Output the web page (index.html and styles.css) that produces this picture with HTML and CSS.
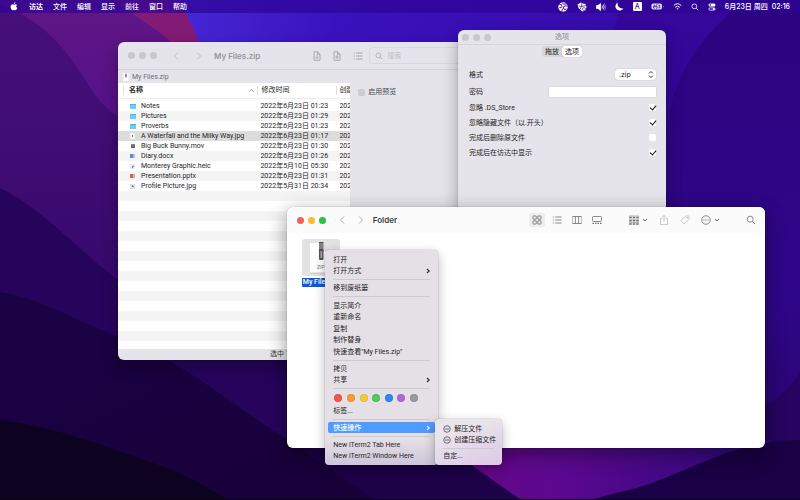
FILE: index.html
```html
<!DOCTYPE html>
<html lang="zh-CN">
<head>
<meta charset="utf-8">
<title>访达</title>
<link rel="stylesheet" href="styles.css">
</head>
<body>
<svg class="wallpaper" viewBox="0 0 800 500" preserveAspectRatio="xMidYMid slice" aria-hidden="true">
  <defs>
    <linearGradient id="sky" x1="0" y1="0" x2="1" y2="0"><stop offset=".22" stop-color="#4628d4"/><stop offset=".42" stop-color="#3a12bd"/><stop offset="1" stop-color="#3508a0"/></linearGradient>
    <linearGradient id="right" x1="0" y1="0" x2="0" y2="1"><stop offset="0" stop-color="#35079c"/><stop offset=".5" stop-color="#31058c"/><stop offset="1" stop-color="#2a0570"/></linearGradient>
    <linearGradient id="far" x1="0" y1="0" x2="0" y2="1"><stop offset="0" stop-color="#2c0480"/><stop offset=".6" stop-color="#2e0688"/><stop offset="1" stop-color="#260560"/></linearGradient>
    <linearGradient id="mag" x1="0" y1="0" x2="1" y2="1"><stop offset="0" stop-color="#7a1a80"/><stop offset="1" stop-color="#8d1c66"/></linearGradient>
    <linearGradient id="upper" x1="0" y1="0" x2="0" y2="1"><stop offset="0" stop-color="#611684"/><stop offset="1" stop-color="#4a0f8c"/></linearGradient>
    <linearGradient id="left" x1="0" y1="0" x2="0" y2="1"><stop offset="0" stop-color="#471078"/><stop offset="1" stop-color="#2b0566"/></linearGradient>
    <linearGradient id="low" x1="0" y1="0" x2="1" y2="1"><stop offset="0" stop-color="#1a0246"/><stop offset="1" stop-color="#180138"/></linearGradient>
    <linearGradient id="glow" x1="0" y1="0" x2="1" y2="0"><stop offset="0" stop-color="#680682"/><stop offset=".35" stop-color="#5c0890"/><stop offset="1" stop-color="#2c087c"/></linearGradient>
  </defs>
  <rect width="800" height="500" fill="url(#sky)"/>
  <path d="M619 0C618 30 605 60 560 120L400 500H800V0z" fill="url(#right)"/>
  <path d="M745 0C700 35 675 75 668 120L640 500H800V0z" fill="url(#far)"/>
  <path d="M765 406C780 397 792 386 800 373V500H740z" fill="#26045f"/>
  <path d="M0 0H178C186 14 194 28 200 46L230 200H0z" fill="url(#mag)"/>
  <path d="M0 0H115C135 18 158 28 175 46L220 200H0z" fill="url(#upper)"/>
  <path d="M0 5C40 18 66 48 84 78C96 98 108 112 125 120L240 300V460H0z" fill="url(#left)"/>
  <path d="M0 188C50 212 90 265 140 295L320 370L420 500H0z" fill="#26045c"/>
  <path d="M0 292C40 298 80 322 118 337C190 364 230 405 290 441L375 500H0z" fill="url(#low)"/>
  <path d="M0 420C60 428 110 448 150 462C180 472 205 485 228 500H0z" fill="#0e0221"/>
  <path d="M290 360L470 464L521 500H375L290 441z" fill="#1d0248"/>
  <path d="M440 440H770L760 500H521L470 464z" fill="url(#glow)"/>
  <path d="M620 492C680 480 725 440 800 440V500H590z" fill="#1a0044"/>
  <rect y="499" width="800" height="1" fill="#0b0116"/>
</svg>

<svg class="sprite" aria-hidden="true">
  <symbol id="back" viewBox="0 0 6 10"><path d="M5 1.5 1.5 5 5 8.500"/></symbol>
  <symbol id="fwd" viewBox="0 0 6 10"><path d="M1 1.500 4.500 5 1 8.500"/></symbol>
  <symbol id="more" viewBox="0 0 6 10"><path d="M1 2.500 4 5 1 7.500"/></symbol>
  <symbol id="down" viewBox="0 0 6 10"><path d="M1 4 3 6 5 4"/></symbol>
  <symbol id="lens" viewBox="0 0 10 10"><circle cx="4.200" cy="4.200" r="3"/><path d="M6.500 6.500 9 9"/></symbol>
  <symbol id="list" viewBox="0 0 10 10"><path d="M3.200 2H9.500M3.200 5H9.500M3.200 8H9.500M.8 2h1M.8 5h1M.8 8h1"/></symbol>
</svg>

<header class="menubar">
  <svg class="apple" viewBox="0 0 14 17" fill="#fff" aria-label="Apple"><path d="M9.600 0c.1 1.700-1.200 3.400-2.900 3.500C6.500 1.900 8 .2 9.600 0zM12.600 5.800c-2.200 1.400-1.800 4.400.6 5.300-.5 1.600-2 4.300-3.500 4.400-1 0-1.400-.6-2.600-.6s-1.600.6-2.600.6C2.400 15.500.5 11.800.6 8.900.7 6 2.600 4.300 4.500 4.300c1.100 0 1.900.7 2.700.7.700 0 1.700-.8 3-.7 1 .1 1.900.5 2.400 1.500z"/></svg>
  <nav class="menus">
    <a href="#">访达</a><a href="#">文件</a><a href="#">编辑</a><a href="#">显示</a><a href="#">前往</a><a href="#">窗口</a><a href="#">帮助</a>
  </nav>
  <div class="status">
    <svg class="s10" viewBox="0 0 20 20"><circle cx="10" cy="10" r="9.500" fill="#fff"/><path d="M2 4q7 1 6 5t-5 2M8 1q1 5 9 3M19 8q-9-1-8 4t6 2M8 19q-1-4 2-6" fill="none" stroke="#35099b" stroke-width="2"/></svg>
    <svg class="s10" viewBox="0 0 20 20"><path d="M1 5 8 1l4 2 5 1 2 6-2 7-6 2-4-3-4-4z" fill="#fff"/><path d="M3 8l6 1 1-7M9 9l-3 6M9 9l9-2" stroke="#35099b" stroke-width="1.400" fill="none"/><circle cx="14" cy="14" r="3" fill="none" stroke="#35099b" stroke-width="1.200"/></svg>
    <svg class="s10" viewBox="0 0 20 20" fill="none" stroke="#fff" stroke-width="1.600"><path d="M1 7h3l5-4v14l-5-4H1z" fill="#fff"/><path d="M12 7q2 3 0 6M14.500 5q3.500 5 0 10"/><path d="M17 3q5 7 0 14" opacity=".5"/></svg>
    <svg class="s9" viewBox="0 0 16 16"><path d="M5 1a7.500 7.500 0 1 0 10 10A8 8 0 0 1 5 1z" fill="#fff"/></svg>
    <span class="ime">A</span>
    <svg class="battery" viewBox="0 0 26 14"><rect x="1" y="1" width="21" height="12" rx="3.500" fill="#fff" fill-opacity=".85"/><path d="M24 5q2 2 0 4z" fill="#fff"/><path d="M12.500 2 9 7.500h4L11 12M5 4.500h3v2.500H5v3h3M15 4.500h3l-1.500 2q2 0 1.500 3h-3" fill="none" stroke="#35099b" stroke-width="1.400"/></svg>
    <svg class="s9" viewBox="0 0 18 18" fill="none" stroke="#fff" stroke-width="2"><path d="M1.500 7q7.500-7 15 0M4.500 10.500q4.500-4 9 0"/><path d="M7 13.200q2-1.800 4 0L9 15.500z" fill="#fff" stroke="none"/></svg>
    <svg class="s8 line"><use href="#lens"/></svg>
    <svg class="s8" viewBox="0 0 16 16"><rect x="1" y="1" width="14" height="6" rx="3" fill="#fff"/><circle cx="4.500" cy="4" r="1.600" fill="#35099b"/><rect x="1.700" y="9.700" width="12.600" height="4.600" rx="2.300" fill="none" stroke="#fff" stroke-width="1.400"/><circle cx="11.500" cy="12" r="2" fill="#fff"/></svg>
    <time><span>6月23日 周四</span><span>02:16</span></time>
  </div>
</header>

<main class="desktop">
  <section class="window archive" aria-label="My Files.zip">
    <div class="titlebar">
      <div class="lights off"><i></i><i></i><i></i></div>
      <div class="arrows"><button aria-label="后退"><svg><use href="#back"/></svg></button><button aria-label="前进"><svg><use href="#fwd"/></svg></button></div>
      <h1>My Files.zip</h1>
      <div class="tools">
        <button aria-label="解压"><svg viewBox="0 0 16 20"><path d="M2 1.500h7l5 5v12H2zM9 1.500v5h5M8 7v8M5.500 12.500 8 15l2.500-2.500"/></svg></button>
        <button aria-label="添加"><svg viewBox="0 0 16 20"><path d="M2 1.500h7l5 5v12H2zM9 1.500v5h5M8 8v8M4.500 12h7"/></svg></button>
        <button aria-label="列表"><svg><use href="#list"/></svg></button>
      </div>
      <label class="search"><svg><use href="#lens"/></svg><input type="search" placeholder="搜索" aria-label="搜索"></label>
    </div>
    <div class="path"><svg viewBox="0 0 12 16"><path d="M1 0h10v16H1z" fill="#fff"/><path d="M6 1.500v7" stroke="#444" stroke-width="2.400"/></svg>My Files.zip</div>
    <div class="split">
      <div class="files">
        <table>
          <thead><tr><th class="name">名称<svg viewBox="0 0 10 6"><path d="M1 5l4-4 4 4"/></svg></th><th>修改时间</th><th>创建时间</th></tr></thead>
          <tbody>
            <tr class="gap"><td colspan="3"></td></tr>
            <tr><td class="f folder">Notes</td><td>2022年6月23日 01:23</td><td>2022年</td></tr>
            <tr><td class="f folder">Pictures</td><td>2022年6月23日 01:29</td><td>2022年</td></tr>
            <tr><td class="f folder">Proverbs</td><td>2022年6月23日 01:23</td><td>2022年</td></tr>
            <tr class="selected"><td class="f image">A Waterfall and the Milky Way.jpg</td><td>2022年6月23日 01:17</td><td>2022年</td></tr>
            <tr><td class="f movie">Big Buck Bunny.mov</td><td>2022年6月23日 01:30</td><td>2022年</td></tr>
            <tr><td class="f doc">Diary.docx</td><td>2022年6月23日 01:26</td><td>2022年</td></tr>
            <tr><td class="f heic">Monterey Graphic.heic</td><td>2022年5月10日 05:30</td><td>2022年</td></tr>
            <tr><td class="f slides">Presentation.pptx</td><td>2022年6月23日 01:31</td><td>2022年</td></tr>
            <tr><td class="f photo">Profile Picture.jpg</td><td>2022年5月31日 20:34</td><td>2022年</td></tr>
          </tbody>
        </table>
        <div class="stripes"></div>
      </div>
      <div class="preview"><label><input type="checkbox" disabled>启用预览</label></div>
    </div>
    <footer>选中 1 项</footer>
  </section>

  <section class="window options" aria-label="选项">
    <div class="titlebar"><div class="lights off"><i></i><i></i><i></i></div><h2>选项</h2></div>
    <div class="tabs"><button>拖放</button><button class="on">选项</button></div>
    <form>
      <div class="row tall"><label for="fmt">格式</label><span class="pick"><select id="fmt"><option>.zip</option></select><svg viewBox="0 0 8 12"><path d="M1.500 4.500 4 2l2.500 2.500M1.500 7.500 4 10l2.500-2.500"/></svg></span></div>
      <div class="row tall"><label for="pw">密码</label><input id="pw" type="password"></div>
      <div class="row"><label for="c1">忽略 .DS_Store</label><input id="c1" type="checkbox" checked></div>
      <div class="row"><label for="c2">忽略隐藏文件（以.开头）</label><input id="c2" type="checkbox" checked></div>
      <div class="row"><label for="c3">完成后删除原文件</label><input id="c3" type="checkbox"></div>
      <div class="row"><label for="c4">完成后在访达中显示</label><input id="c4" type="checkbox" checked></div>
    </form>
  </section>

  <section class="window finder" aria-label="Folder">
    <div class="titlebar">
      <div class="lights"><i></i><i></i><i></i></div>
      <div class="arrows"><button aria-label="后退"><svg><use href="#back"/></svg></button><button aria-label="前进"><svg><use href="#fwd"/></svg></button></div>
      <h2>Folder</h2>
      <div class="views">
        <button class="on" aria-label="图标"><svg viewBox="0 0 20 20"><rect x="2" y="2" width="6.500" height="6.500" rx="1"/><rect x="11.500" y="2" width="6.500" height="6.500" rx="1"/><rect x="2" y="11.500" width="6.500" height="6.500" rx="1"/><rect x="11.500" y="11.500" width="6.500" height="6.500" rx="1"/></svg></button>
        <button aria-label="列表"><svg class="thin"><use href="#list"/></svg></button>
        <button aria-label="分栏"><svg viewBox="0 0 20 20"><rect x="0" y="3" width="20" height="14" rx="2"/><path d="M6.700 3v14M13.300 3v14"/></svg></button>
        <button aria-label="画廊"><svg viewBox="0 0 20 20"><rect x="1" y="3" width="18" height="10" rx="2"/><path d="M1 16.500h3M6 16.500h3M11 16.500h3M16 16.500h3" stroke-width="2.500"/></svg></button>
      </div>
      <div class="actions">
        <button aria-label="分组"><svg viewBox="0 0 20 20"><path d="M0 2h20M0 8.500h20M0 15h20" stroke-width="1"/><path d="M.5 5h5M7.500 5h5M14.500 5h5M.5 11.500h5M7.500 11.500h5M14.500 11.500h5M.5 18h5M7.500 18h5M14.500 18h5" stroke-width="2.600"/></svg><svg class="chev"><use href="#down"/></svg></button>
        <button class="dim" aria-label="共享"><svg viewBox="0 0 20 20"><path d="M7 7H3v12h14V7h-4M10 13V1M6.500 4.500 10 1l3.500 3.500"/></svg></button>
        <button class="dim" aria-label="标签"><svg viewBox="0 0 20 20"><path d="M11.500 2H18v6.500L8.500 18 1.500 11.500z"/><circle cx="14.500" cy="5.500" r=".8"/></svg></button>
        <button aria-label="更多"><svg viewBox="0 0 20 20"><circle cx="10" cy="10" r="8.500"/><path d="M5 10h2M9 10h2M13 10h2" stroke-width="2.200"/></svg><svg class="chev"><use href="#down"/></svg></button>
        <button class="find" aria-label="搜索"><svg class="thin"><use href="#lens"/></svg></button>
      </div>
    </div>
    <figure class="file">
      <div class="thumb"><svg viewBox="0 0 44 64"><path d="M0 2h28l16 16v44H0z" fill="#fff"/><path d="M28 2v16h16z" fill="#ddd"/><path d="M18 0h9v20h-9z" fill="#4a4a4a"/><path d="M18 4h9M18 8h9M18 12h9" stroke="#ddd" stroke-width="1.500"/><rect x="18" y="15" width="9" height="21" rx="2" fill="#555"/><rect x="20.500" y="18" width="4" height="14" fill="#999"/><path d="M0 62h44" stroke="#bbb" stroke-width="1.500"/></svg><span>ZIP</span></div>
      <figcaption>My Files.zip</figcaption>
    </figure>
  </section>

  <div class="menu context" role="menu">
    <button role="menuitem">打开</button>
    <button role="menuitem">打开方式<svg><use href="#more"/></svg></button>
    <hr>
    <button role="menuitem">移到废纸篓</button>
    <hr>
    <button role="menuitem">显示简介</button>
    <button role="menuitem">重新命名</button>
    <button role="menuitem">复制</button>
    <button role="menuitem">制作替身</button>
    <button role="menuitem">快速查看"My Files.zip"</button>
    <hr>
    <button role="menuitem">拷贝</button>
    <button role="menuitem">共享<svg><use href="#more"/></svg></button>
    <hr>
    <div class="tags"><i class="red"></i><i class="orange"></i><i class="yellow"></i><i class="green"></i><i class="blue"></i><i class="purple"></i><i class="gray"></i></div>
    <button role="menuitem">标签...</button>
    <hr>
    <button role="menuitem" class="active">快速操作<svg><use href="#more"/></svg></button>
    <hr>
    <button role="menuitem">New iTerm2 Tab Here</button>
    <button role="menuitem">New iTerm2 Window Here</button>
  </div>
  <div class="menu sub" role="menu">
    <button role="menuitem"><svg class="circ" viewBox="0 0 16 16"><circle cx="8" cy="8" r="6.500"/><path d="M4 8h8"/></svg>解压文件</button>
    <button role="menuitem"><svg class="circ" viewBox="0 0 16 16"><circle cx="8" cy="8" r="6.500"/><path d="M4 8h8"/></svg>创建压缩文件</button>
    <hr>
    <button role="menuitem">自定...</button>
  </div>
</main>
</body>
</html>
```
FILE: styles.css
```css
* { box-sizing: border-box; }
html, body { height: 100%; }
body {
  margin: 0;
  overflow: hidden;
  position: relative;
  background: #2c0580;
  color: #262528;
  font: 7px/10px Roboto, "Noto Sans CJK SC", sans-serif;
}
button, input, select {
  font: inherit;
  color: inherit;
  border: 0;
  padding: 0;
  margin: 0;
  background: none;
  outline: 0;
}
svg { display: block; flex: none; }
h1, h2 { margin: 0; font: 600 8px/10px Inter, "Noto Sans CJK SC", sans-serif; white-space: nowrap; }
.sprite { position: absolute; width: 0; height: 0; }
.wallpaper { position: absolute; inset: 0; width: 100%; height: 100%; }

/* menu bar */
.menubar {
  position: relative;
  display: flex;
  align-items: center;
  height: 13px;
  padding: 0 10px;
  background: rgba(46, 4, 150, .72);
  color: #fff;
  font-family: Inter, "Noto Sans CJK SC", sans-serif;
  font-weight: 500;
}
.apple { width: 8px; height: 9px; }
.menus { display: flex; gap: 10px; margin-left: 11px; }
.menus a { color: #fff; text-decoration: none; }
.menus a:first-child { font-weight: 700; }
.status { display: flex; align-items: center; gap: 9px; margin-left: auto; }
.s10 { width: 10px; height: 10px; }
.s9 { width: 9px; height: 9px; }
.s8 { width: 8px; height: 8px; }
.battery { width: 13px; height: 7px; }
.line { fill: none; stroke: #fff; stroke-width: 1; }
.ime { width: 9px; height: 9px; line-height: 9px; border-radius: 1px; background: #fff; color: #35099b; text-align: center; }
time { display: flex; gap: 4px; white-space: nowrap; }

/* windows */
.window {
  position: absolute;
  display: flex;
  flex-direction: column;
  border-radius: 6px;
  overflow: hidden;
  box-shadow: 0 0 1px rgba(0, 0, 0, .5), 0 6px 16px rgba(0, 0, 0, .32);
}
.titlebar { display: flex; align-items: center; flex: none; }
.lights { display: flex; gap: 4px; }
.lights i { width: 7px; height: 7px; border-radius: 50%; background: #f35f57; }
.lights i:nth-child(2) { background: #f8bb32; }
.lights i:nth-child(3) { background: #29c241; }
.lights.off i { background: #c9c7cd; }
.arrows { display: flex; }
.arrows svg { width: 6px; height: 10px; fill: none; stroke: #a9a8ab; stroke-width: 1; }

.archive { left: 14.75%; top: 42px; width: 44%; height: 318px; background: #e5e4ea; }
.archive .titlebar { height: 28px; padding-left: 10px; border-bottom: 1px solid #d3d2d8; }
.archive .arrows { gap: 17px; margin-left: 16px; }
.archive .arrows svg { stroke: #bdbcc2; }
.archive h1 { margin-left: 12px; color: #98979c; }
.tools { display: flex; align-items: center; gap: 12px; margin-left: 53px; }
.tools svg { width: 8px; height: 10px; fill: none; stroke: #96959b; stroke-width: 1.500; }
.tools button:last-child svg { width: 10px; stroke-width: .8; }
.search { display: flex; align-items: center; gap: 4px; flex: 1; height: 17px; margin-left: 6px; padding-left: 5px; border: 1px solid #d9d8de; border-radius: 4px; }
.search svg { width: 8px; height: 8px; fill: none; stroke: #a3a2a8; stroke-width: .9; }
.search input { width: 60px; }
.search input::placeholder { color: #bfbec4; }
.path { display: flex; align-items: center; gap: 3px; flex: none; height: 13px; padding-left: 5px; color: #6f6e73; }
.path svg { width: 6px; height: 8px; }
.split { display: flex; flex: 1; min-height: 0; }
.files { display: flex; flex-direction: column; width: 66%; background: #fff; overflow: hidden; }
.archive footer { flex: none; height: 11px; padding-left: 152px; color: #3c3b3f; }
table { width: 100%; table-layout: fixed; border-collapse: collapse; }
th, td { height: 10px; padding: 0 0 0 3px; line-height: 10px; text-align: left; white-space: nowrap; overflow: hidden; }
th { height: 15px; font-weight: 400; border-bottom: 1px solid #ececec; background: linear-gradient(#dedede, #dedede) left / 1px 9px no-repeat; }
th:nth-child(2) { width: 34%; padding-left: 4px; }
th:nth-child(3) { width: 6%; }
th.name { padding-left: 11px; font-weight: 600; background-position: 5px 50%; }
th svg { float: right; width: 5px; height: 3px; margin: 4px 3px 0 0; fill: none; stroke: #777; stroke-width: 1.500; }
.gap td { height: 3px; }
tbody tr:nth-child(odd):not(.gap) { background: #f4f4f5; }
tbody tr.selected { background: #dcdcdc !important; }
.f { padding-left: 23px; background-repeat: no-repeat; background-position: 12px 50%; }
.folder { background-image: linear-gradient(#4bb4e6 1px, #6fcbf3 1px); background-size: 6px 5px; }
.image { background-image: radial-gradient(circle, #777 1px, #f6f6f6 1px); background-size: 5px 6px; }
.movie { background-image: linear-gradient(#7e8b96, #4e5e6c); background-size: 4px 4px; background-position: 13px 50%; }
.doc { background-image: linear-gradient(90deg, #5c86da 3px, #a9c2ee 3px); background-size: 5px 4px; }
.heic { background-image: radial-gradient(circle, #6c8ad0 1px, #e0e6f2 1px); background-size: 5px 5px; }
.slides { background-image: linear-gradient(90deg, #d95f4a 3px, #eda598 3px); background-size: 5px 4px; }
.photo { background-image: radial-gradient(circle, #78858f 1px, #dde1e4 1px); background-size: 5px 5px; }
.stripes { flex: 1; background: repeating-linear-gradient(#f4f4f5 0 10px, #fff 10px 20px); }
.preview { padding: 4px 0 0 8px; color: #4a494d; white-space: nowrap; }
.preview label { display: flex; align-items: center; gap: 3px; }

input[type="checkbox"] { appearance: none; width: 7px; height: 7px; border-radius: 2px; background: #fff; display: flex; justify-content: center; }
input[type="checkbox"]:checked::before { content: ""; width: 3px; height: 5px; border: solid #111; border-width: 0 1px 1px 0; transform: rotate(40deg); }
input[type="checkbox"]:disabled { background: #cbcacf; }

.options { left: 57.25%; top: 30px; width: 26%; height: 200px; background: #e5e4ea; }
.options .titlebar { height: 15px; padding: 0 4px; border-bottom: 1px solid #d6d5db; }
.options h2 { flex: 1; padding-right: 29px; text-align: center; font-size: 7px; font-weight: 500; color: #9a999e; }
.tabs { display: flex; align-self: center; margin-top: 1px; border-radius: 3px; background: #d6d5da; }
.tabs button { height: 11px; padding: 0 3px; border-radius: 3px; color: #1f1e21; }
.tabs .on { background: #fff; box-shadow: 0 0 1px rgba(0, 0, 0, .3); }
form { display: flex; flex-direction: column; padding: 9px 10px 0 11px; }
.row { display: flex; align-items: center; justify-content: space-between; height: 15px; }
.row.tall { height: 17px; }
.row label { white-space: nowrap; }
.pick { position: relative; width: 22%; }
.pick select { display: block; appearance: none; width: 100%; height: 11px; padding-left: 4px; border-radius: 3px; background: #fff; box-shadow: 0 0 1px rgba(0, 0, 0, .35); font-family: Inter, sans-serif; }
.pick svg { position: absolute; right: 2px; top: 1px; width: 6px; height: 9px; fill: none; stroke: #222; stroke-width: 1.200; pointer-events: none; }
#pw { width: 57%; height: 10px; background: #fff; box-shadow: 0 0 1px rgba(0, 0, 0, .25); }

.finder { left: 35.85%; top: 207px; width: 59.8%; height: 241px; background: #fff; box-shadow: 0 0 1px rgba(0, 0, 0, .6), 0 6px 20px rgba(0, 0, 0, .42); }
.finder .titlebar { height: 26px; padding: 0 9px 0 10px; background: #fcfbfc; }
.finder .arrows { gap: 13px; margin-left: 13px; }
.finder h2 { margin-left: 9px; color: #3c3b3e; }
.views { display: flex; gap: 4px; margin-left: auto; }
.views button { display: grid; place-items: center; width: 16px; height: 14px; border-radius: 3px; }
.views .on { background: #eeedee; }
.views svg, .actions svg { width: 10px; height: 10px; fill: none; stroke: #6c6b6e; stroke-width: 1.600; }
.views svg.thin, .actions svg.thin { stroke-width: .8; }
.actions { display: flex; align-items: center; gap: 11px; margin-left: 24px; }
.actions button { display: flex; align-items: center; gap: 3px; }
.actions .dim svg { stroke: #bdbcbf; }
.actions svg.chev { width: 6px; stroke-width: 1; }
.actions .find { margin-left: 15px; }
.file { display: flex; flex-direction: column; width: 38px; margin: 6px 0 0 15px; }
.thumb { display: flex; flex-direction: column; align-items: center; width: 100%; height: 37px; padding-top: 3px; border-radius: 3px; background: #e2e2e3; }
.thumb svg { width: 22px; height: 32px; }
.thumb span { margin-top: -10px; font-size: 5px; line-height: 6px; color: #777; }
.file figcaption { margin-top: 2px; padding: 0 1px; line-height: 9px; border-radius: 1px; background: #0c5bd3; color: #fff; white-space: nowrap; font-weight: 500; }

/* menus */
.menu {
  position: absolute;
  display: flex;
  flex-direction: column;
  padding: 4px 3px 3px;
  border-radius: 4px;
  box-shadow: 0 0 1px rgba(0, 0, 0, .6), 0 4px 12px rgba(0, 0, 0, .28);
}
.menu button {
  display: flex;
  align-items: center;
  flex: 23 1 0;
  min-height: 0;
  padding: 0 4px 0 5px;
  border-radius: 2px;
  text-align: left;
  white-space: nowrap;
}
.menu button svg { width: 5px; height: 8px; margin-left: auto; fill: none; stroke: #2a292c; stroke-width: 1.300; }
.menu button svg.circ { width: 8px; margin: 0 3px 0 0; }
.menu hr { flex: 11 1 0; width: auto; margin: 0 5px; border: 0; background: linear-gradient(#cfcad1, #cfcad1) center / 100% 1px no-repeat; }
.menu .active { background: #4f9bff; color: #fff; font-weight: 500; }
.menu .active svg { stroke: #fff; }
.context { left: 40.65%; top: 250px; width: 113px; height: 215px; background: linear-gradient(#e5e0e6 0 88%, #cdc5da); }
.sub { left: 54.4%; top: 419px; width: 67px; height: 46px; background: linear-gradient(160deg, #eae5ec 25%, #dbc8e6); }
.tags { display: flex; align-items: center; justify-content: space-between; flex: 26 1 0; padding: 0 17px 0 6px; }
.tags i { width: 8px; height: 8px; border-radius: 50%; border: 1px solid rgba(0, 0, 0, .08); }
.red { background: #f4564e; }
.orange { background: #f79a35; }
.yellow { background: #f5cb35; }
.green { background: #4ccd5e; }
.blue { background: #2f86f6; }
.purple { background: #b068d6; }
.gray { background: #98979a; }
```
